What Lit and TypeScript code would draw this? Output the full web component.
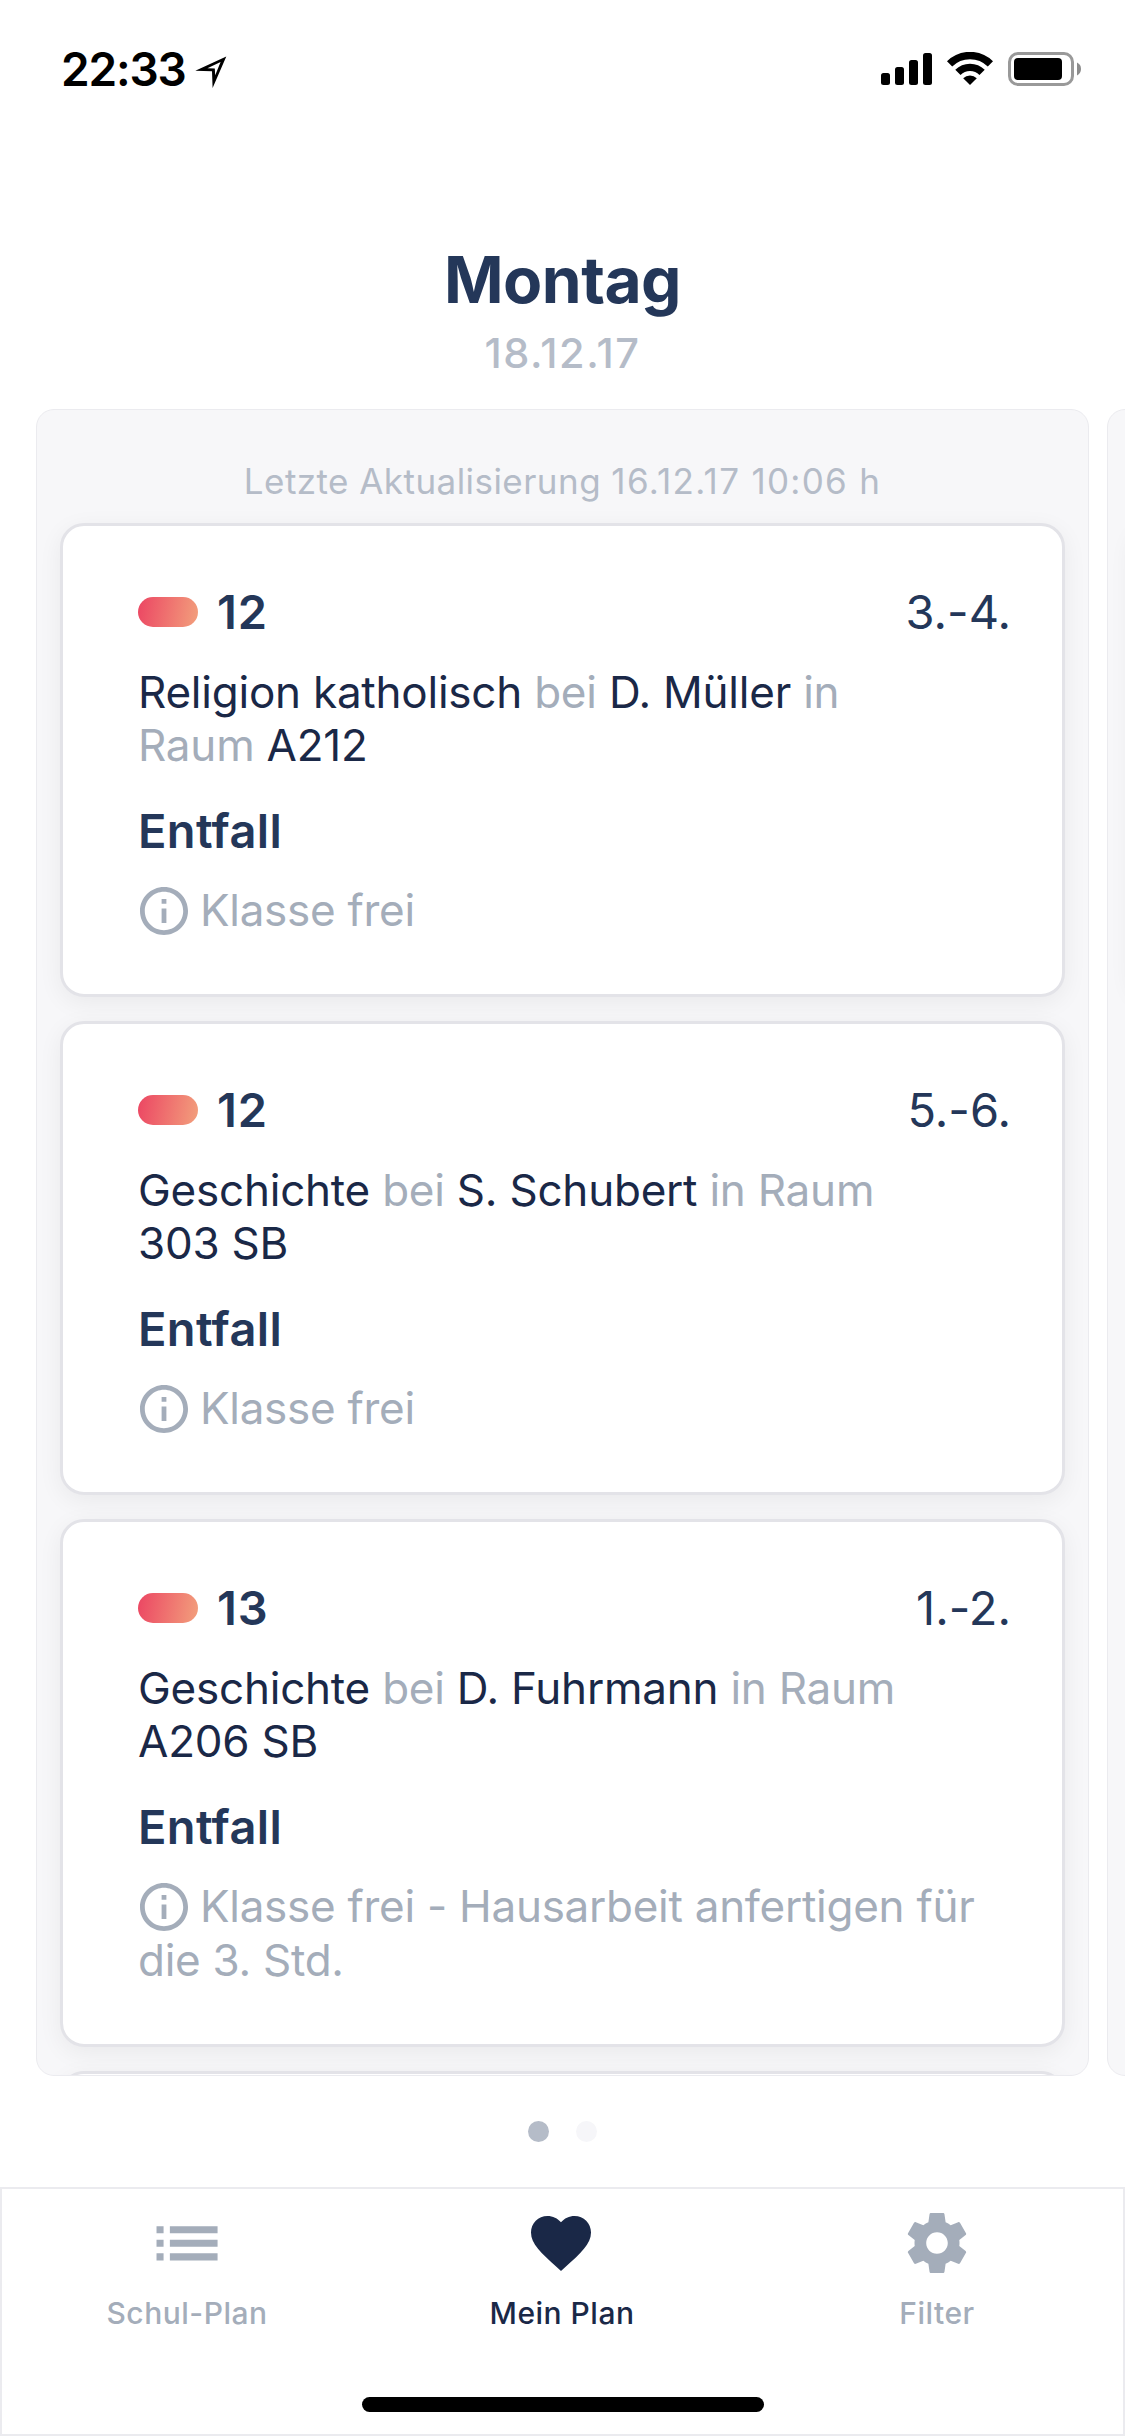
import { LitElement, html, css, svg, nothing } from "lit";
import { customElement, property } from "lit/decorators.js";

interface Lesson {
  form: string;
  hours: string;
  subject: string;
  teacher: string;
  room: string;
  kind: string;
  note: string;
}

const LESSONS: Lesson[] = [
  { form: "12", hours: "3.-4.", subject: "Religion katholisch", teacher: "D. Müller", room: "A212", kind: "Entfall", note: "Klasse frei" },
  { form: "12", hours: "5.-6.", subject: "Geschichte", teacher: "S. Schubert", room: "303 SB", kind: "Entfall", note: "Klasse frei" },
  { form: "13", hours: "1.-2.", subject: "Geschichte", teacher: "D. Fuhrmann", room: "A206 SB", kind: "Entfall", note: "Klasse frei - Hausarbeit anfertigen für die 3. Std." },
];

@customElement("status-bar")
class StatusBar extends LitElement {
  static styles = css`
    :host { display: flex; align-items: center; height: 137px; padding: 0 44px 0 61px; color: #000; }
    .time { font-size: 46px; font-weight: 600; line-height: 56px; letter-spacing: -1.2px; }
    .arrow { margin-left: 9px; margin-top: 6px; }
    .spacer { flex: 1; }
    .icons { display: block; }
  `;
  render() {
    return html`
      <span class="time">22:33</span>
      <svg class="arrow" width="32" height="32" viewBox="0 0 32 32">
        <path fill-rule="evenodd" d="M31.3 .6 17.6 32 17 15.2.3 14.8ZM25.6 6 12.4 12.3 19.8 12.4 20.2 19.2Z" />
      </svg>
      <span class="spacer"></span>
      <svg class="icons" width="200" height="34" viewBox="0 0 200 34">
        <rect x="0" y="21" width="9" height="12" rx="2.5" />
        <rect x="14" y="15" width="9" height="18" rx="2.5" />
        <rect x="28" y="8" width="9" height="25" rx="2.5" />
        <rect x="42" y="1" width="9" height="32" rx="2.5" />
        <g fill="none" stroke="#000" stroke-width="7.4">
          <path d="M68.6 11.9A29 29 0 0 1 109.4 11.9" />
          <path d="M76.9 20.4A17 17 0 0 1 101.1 20.4" />
        </g>
        <path d="M89 33 82.2 26.2A9.8 9.8 0 0 1 95.8 26.2Z" />
        <rect x="128.5" y="1.5" width="63" height="31" rx="8.5" fill="none" stroke="#999" stroke-width="3" />
        <rect x="133" y="6" width="48" height="22" rx="4" />
        <path d="M196 10.6Q200 12.6 200 17T196 23.4Z" fill="#8c8c8c" />
      </svg>
    `;
  }
}

@customElement("lesson-card")
class LessonCard extends LitElement {
  @property({ attribute: false }) lesson?: Lesson;

  static styles = css`
    :host {
      display: block; flex: none; box-sizing: border-box; background: #fff;
      border: 3px solid #e3e3e8; border-radius: 24px; padding: 56px 51px 56px 75px;
      box-shadow: 0 6px 24px rgba(0, 0, 0, 0.06); min-height: 474px;
    }
    .head { display: flex; align-items: center; height: 60px; color: #243759; font-size: 47px; line-height: 57px; }
    .pill { width: 60px; height: 30px; border-radius: 15px; margin-right: 19px; background: linear-gradient(100deg, #ec4a64 5%, #f29b7b 95%); }
    .form { flex: 1; font-weight: 600; letter-spacing: 0.8px; }
    .form, .hours { padding-bottom: 1px; }
    .desc { width: 790px; margin-top: 23.5px; font-size: 44px; line-height: 53.67px; letter-spacing: -0.23px; color: #a4adba; }
    .strong { color: #1a2847; }
    .kind { margin-top: 28.7px; font-size: 47px; line-height: 57px; font-weight: 600; letter-spacing: 0.4px; color: #243759; }
    .note { margin-top: 25.7px; font-size: 44px; line-height: 53.67px; letter-spacing: -0.27px; color: #a4adba; }
    .info { width: 48px; height: 48px; vertical-align: -8.5px; margin: 0 12px 0 2px; fill: #a4adba; }
  `;
  render() {
    const l = this.lesson;
    if (!l) return nothing;
    return html`
      <div class="head"><span class="pill"></span><span class="form">${l.form}</span><span class="hours">${l.hours}</span></div>
      <div class="desc"><span class="strong">${l.subject}</span> bei <span class="strong">${l.teacher}</span> in Raum <span class="strong">${l.room}</span></div>
      <div class="kind">${l.kind}</div>
      <div class="note"><svg class="info" viewBox="2 2 20 20"><path d="M11 17h2v-6h-2v6zm1-15C6.480 2 2 6.480 2 12s4.480 10 10 10 10-4.480 10-10S17.520 2 12 2zm0 18c-4.410 0-8-3.590-8-8s3.590-8 8-8 8 3.590 8 8-3.590 8-8 8zM11 9h2V7h-2v2z" /></svg>${l.note}</div>
    `;
  }
}

@customElement("day-panel")
class DayPanel extends LitElement {
  @property() caption = "";
  @property() stamp = "";
  @property({ attribute: false }) lessons: Lesson[] = [];

  static styles = css`
    :host {
      display: flex; flex-direction: column; flex: none; box-sizing: border-box;
      width: 1053px; height: 1667px; padding: 50px 23px 0; overflow: hidden;
      background: #f7f7f9; border: 1px solid #ebebef; border-radius: 18px;
    }
    .caption { height: 42px; line-height: 42px; margin-bottom: 21px; text-align: center; font-size: 35px; letter-spacing: 0.45px; color: #b5bcc8; }
    .stamp { letter-spacing: 1.3px; }
    .list { display: flex; flex-direction: column; gap: 24px; }
  `;
  render() {
    return html`
      <div class="caption">${this.caption} <span class="stamp">${this.stamp}</span></div>
      <div class="list">
        ${this.lessons.map((l) => html`<lesson-card .lesson=${l}></lesson-card>`)}
        <lesson-card></lesson-card>
      </div>
    `;
  }
}

const TABS = [
  { label: "Schul-Plan", active: false, icon: svg`<path d="M1.840 6.400h2.350v2.350H1.840zM6.290 6.400h15.900v2.350H6.290zM1.840 10.920h2.350v2.350H1.840zM6.290 10.920h15.900v2.350H6.290zM1.840 15.450h2.350v2.350H1.840zM6.290 15.450h15.900v2.350H6.290z"/>` },
  { label: "Mein Plan", active: true, icon: svg`<path d="M12 21.350l-1.450-1.320C5.400 15.360 2 12.280 2 8.500 2 5.420 4.420 3 7.500 3c1.740 0 3.410.810 4.500 2.090C13.090 3.810 14.760 3 16.500 3 19.580 3 22 5.420 22 8.500c0 3.780-3.400 6.860-8.550 11.540L12 21.350z"/>` },
  { label: "Filter", active: false, icon: svg`<path d="M19.430 12.980c.040-.320.070-.640.070-.980s-.030-.660-.070-.980l2.110-1.650c.190-.150.240-.420.120-.640l-2-3.460c-.120-.220-.390-.300-.610-.220l-2.490 1c-.520-.400-1.080-.730-1.690-.980l-.380-2.650C14.460 2.180 14.250 2 14 2h-4c-.250 0-.460.180-.490.420l-.380 2.650c-.610.250-1.170.590-1.690.980l-2.490-1c-.230-.090-.490 0-.610.220l-2 3.460c-.130.220-.070.490.120.640l2.110 1.650c-.040.320-.070.650-.070.980s.030.660.070.980l-2.110 1.650c-.190.150-.240.420-.120.640l2 3.460c.120.220.390.300.610.220l2.490-1c.520.400 1.080.730 1.690.980l.380 2.650c.030.240.240.420.490.420h4c.250 0 .460-.180.490-.420l.380-2.650c.610-.250 1.170-.590 1.690-.980l2.490 1c.230.090.490 0 .610-.220l2-3.460c.120-.220.070-.490-.120-.640l-2.110-1.650zM12 15.600c-1.980 0-3.600-1.620-3.600-3.600s1.620-3.600 3.600-3.600 3.600 1.620 3.600 3.600-1.620 3.600-3.600 3.600z"/>` },
];

@customElement("tab-bar")
class TabBar extends LitElement {
  static styles = css`
    :host { display: flex; flex-direction: column; box-sizing: border-box; height: 249px; border: 2px solid #ebebef; background: #fff; }
    .tabs { display: grid; grid-template-columns: repeat(3, 1fr); padding-top: 18px; margin: 0 -2px; }
    .tab { display: flex; flex-direction: column; align-items: center; color: #a4adba; font-size: 30px; font-weight: 500; letter-spacing: 0.5px; }
    .tab.active { color: #1a2847; }
    .icon { width: 72px; height: 72px; margin-right: 1px; fill: currentColor; }
    .active .icon { margin-right: 3px; }
    .label { line-height: 36px; margin-top: 16px; margin-right: 1px; }
    .home { width: 402px; height: 15px; border-radius: 8px; background: #000; margin: auto auto 22px; }
  `;
  render() {
    return html`
      <div class="tabs">
        ${TABS.map((t) => html`<div class="tab ${t.active ? "active" : ""}"><svg class="icon" viewBox="0 0 24 24">${t.icon}</svg><span class="label">${t.label}</span></div>`)}
      </div>
      <div class="home"></div>
    `;
  }
}

@customElement("app-root")
class AppRoot extends LitElement {
  static styles = css`
    :host {
      display: flex; flex-direction: column; width: 1125px; height: 2436px; overflow: hidden;
      background: #fff; font-family: Inter, "Liberation Sans", sans-serif; font-feature-settings: "calt" 0;
    }
    .title { margin-top: 104px; height: 78px; line-height: 78px; text-align: center; font-size: 64px; font-weight: 700; letter-spacing: -0.5px; color: #243759; }
    .date { margin-top: 9px; height: 50px; line-height: 50px; text-align: center; font-size: 41.5px; font-weight: 500; letter-spacing: 1.5px; color: #b5bcc8; }
    .slider { display: flex; gap: 18px; padding-left: 36px; margin-top: 31px; overflow: hidden; flex: none; }
    .dots { display: flex; justify-content: center; gap: 27px; margin: 45px 0; }
    .dot { width: 21px; height: 21px; border-radius: 50%; background: #f6f6f9; }
    .dot.on { background: #b5bcc8; }
  `;
  render() {
    return html`
      <status-bar></status-bar>
      <div class="title">Montag</div>
      <div class="date">18.12.17</div>
      <div class="slider">
        <day-panel caption="Letzte Aktualisierung" stamp="16.12.17 10:06 h" .lessons=${LESSONS}></day-panel>
        <day-panel></day-panel>
      </div>
      <div class="dots"><span class="dot on"></span><span class="dot"></span></div>
      <tab-bar></tab-bar>
    `;
  }
}
